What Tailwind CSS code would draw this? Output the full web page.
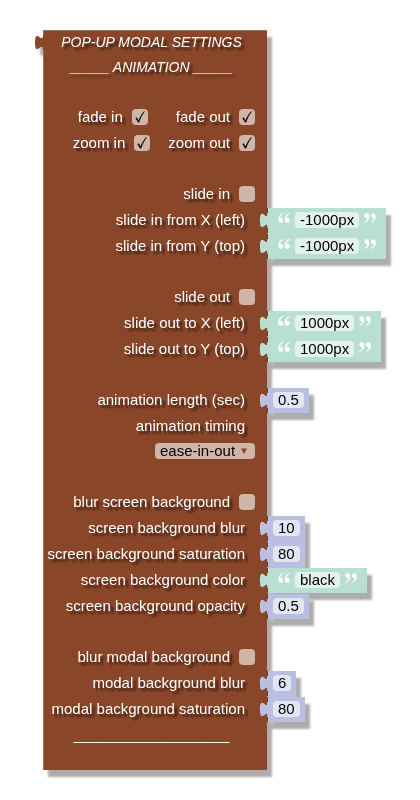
<!DOCTYPE html>
<html lang="en">
<head>
<meta charset="utf-8">
<meta name="viewport" content="width=device-width, initial-scale=1">
<title>Pop-up modal settings</title>
<script src="https://cdn.jsdelivr.net/npm/@tailwindcss/browser@4"></script>
</head>
<body class="bg-white font-['Liberation_Sans',Arial,sans-serif] text-[15px] leading-6 text-white">

<svg class="hidden" aria-hidden="true">
  <symbol id="tab" viewBox="0 0 9 25">
    <path d="M9 0V5H8c0 10-8-8-8 7.500s8-2.500 8 7.500H9z" fill="currentColor"/>
  </symbol>
  <symbol id="edge" viewBox="0 0 9 25">
    <path d="M7.500 0V5M7.500 20V25" stroke="#50443f" stroke-width="1"/>
    <path d="M8 5.500c0 10-7.500-8-7.500 7" fill="none" stroke="#fff" stroke-opacity=".3"/>
  </symbol>
  <symbol id="check" viewBox="0 0 16 16">
    <path d="M3.300 9.200 4.800 8.200 6.500 11.300C7.800 7.800 9.800 4.800 12 2.300L12.900 2.500C10.500 5.700 8.600 9.300 7.200 13.400H5.800C5.200 11.800 4.400 10.300 3.300 9.200z" fill="#111"/>
  </symbol>
  <symbol id="open" viewBox="0 0 12 10">
    <path id="q" d="M5.300.1C2.200.8.2 3.200.2 6.300.2 8.600 1.200 9.800 2.800 9.800 4.200 9.800 5.200 8.800 5.200 7.400 5.200 6 4.300 5.100 3 5.100 2.600 5.100 2.300 5.200 2.100 5.300 2.300 3.300 3.400 1.700 5.500.6z" fill="#fff"/>
    <use href="#q" x="6.500"/>
  </symbol>
</svg>

<main class="w-fit pt-[30px] pb-[30px] pl-[43px]">
  <form class="relative drop-shadow-[5px_7px_1px_rgba(0,0,0,0.32)]">
    <svg class="absolute top-0 -left-2 h-[25px] w-[9px] text-[#8a4629]" aria-hidden="true"><use href="#tab"/></svg>

    <header class="w-[224px] border-t border-l border-[#a5705a] bg-[#8a4629] pr-2 text-center text-sm leading-6 italic text-shadow-[3px_3px_2px_rgba(0,0,0,0.6)]">
      <h1 class="-mt-px h-[25px]">POP-UP MODAL SETTINGS</h1>
      <h2 class="h-[50px]">_____ ANIMATION _____</h2>
    </header>

    <div class="w-[224px] border-l border-[#a5705a] bg-[#8a4629] pr-3 pb-[25px] text-shadow-[3px_3px_2px_rgba(0,0,0,0.6)]">
      <div class="flex h-[26px] justify-end gap-7">
        <label class="flex h-6 items-center gap-[9px]">fade in
          <span class="relative size-4"><input type="checkbox" checked class="peer block size-4 appearance-none rounded-[4px] bg-white/60"><svg class="pointer-events-none absolute inset-0 hidden size-4 peer-checked:block" aria-hidden="true"><use href="#check"/></svg></span></label>
        <label class="flex h-6 items-center gap-[9px]">fade out
          <span class="relative size-4"><input type="checkbox" checked class="peer block size-4 appearance-none rounded-[4px] bg-white/60"><svg class="pointer-events-none absolute inset-0 hidden size-4 peer-checked:block" aria-hidden="true"><use href="#check"/></svg></span></label>
      </div>
      <div class="flex h-[26px] justify-end gap-[18px]">
        <label class="flex h-6 items-center gap-[9px]">zoom in
          <span class="relative size-4"><input type="checkbox" checked class="peer block size-4 appearance-none rounded-[4px] bg-white/60"><svg class="pointer-events-none absolute inset-0 hidden size-4 peer-checked:block" aria-hidden="true"><use href="#check"/></svg></span></label>
        <label class="flex h-6 items-center gap-[9px]">zoom out
          <span class="relative size-4"><input type="checkbox" checked class="peer block size-4 appearance-none rounded-[4px] bg-white/60"><svg class="pointer-events-none absolute inset-0 hidden size-4 peer-checked:block" aria-hidden="true"><use href="#check"/></svg></span></label>
      </div>
    </div>

    <div class="flex h-[26px] w-[224px] justify-end border-l border-[#a5705a] bg-[#8a4629] pr-3 text-shadow-[3px_3px_2px_rgba(0,0,0,0.6)]">
      <label class="flex h-6 items-center gap-[9px]">slide in <input type="checkbox" class="size-4 appearance-none rounded-[4px] bg-white/60"></label>
    </div>
    <div class="flex h-[26px]">
      <label for="inx" class="w-[224px] shrink-0 border-l border-[#a5705a] bg-[#8a4629] pr-[22px] text-right text-shadow-[3px_3px_2px_rgba(0,0,0,0.6)]">slide in from X (left)</label>
      <div class="relative ml-px flex h-[26px] items-start gap-[5px] bg-[#b9dfd2] pt-1 pr-[10px] pl-[10px]">
        <svg class="absolute top-0 -left-2 h-[25px] w-[9px] text-[#b9dfd2]" aria-hidden="true"><use href="#tab"/><use href="#edge"/></svg>
        <svg class="mt-px h-[10px] w-3" aria-hidden="true"><use href="#open"/></svg>
        <input id="inx" value="-1000px" class="field-sizing-content h-4 rounded-[4px] bg-white/60 px-[5px] leading-4 text-black">
        <svg class="mt-px h-[10px] w-3 rotate-180" aria-hidden="true"><use href="#open"/></svg>
      </div>
    </div>
    <div class="flex h-[26px]">
      <label for="iny" class="w-[224px] shrink-0 border-l border-[#a5705a] bg-[#8a4629] pr-[22px] text-right text-shadow-[3px_3px_2px_rgba(0,0,0,0.6)]">slide in from Y (top)</label>
      <div class="relative ml-px flex h-[25px] items-start gap-[5px] bg-[#b9dfd2] pt-1 pr-[10px] pl-[10px]">
        <svg class="absolute top-0 -left-2 h-[25px] w-[9px] text-[#b9dfd2]" aria-hidden="true"><use href="#tab"/><use href="#edge"/></svg>
        <svg class="mt-px h-[10px] w-3" aria-hidden="true"><use href="#open"/></svg>
        <input id="iny" value="-1000px" class="field-sizing-content h-4 rounded-[4px] bg-white/60 px-[5px] leading-4 text-black">
        <svg class="mt-px h-[10px] w-3 rotate-180" aria-hidden="true"><use href="#open"/></svg>
      </div>
    </div>

    <div class="flex h-[51px] w-[224px] justify-end border-l border-[#a5705a] bg-[#8a4629] pt-[25px] pr-3 text-shadow-[3px_3px_2px_rgba(0,0,0,0.6)]">
      <label class="flex h-6 items-center gap-[9px]">slide out <input type="checkbox" class="size-4 appearance-none rounded-[4px] bg-white/60"></label>
    </div>
    <div class="flex h-[26px]">
      <label for="outx" class="w-[224px] shrink-0 border-l border-[#a5705a] bg-[#8a4629] pr-[22px] text-right text-shadow-[3px_3px_2px_rgba(0,0,0,0.6)]">slide out to X (left)</label>
      <div class="relative ml-px flex h-[26px] items-start gap-[5px] bg-[#b9dfd2] pt-1 pr-[10px] pl-[10px]">
        <svg class="absolute top-0 -left-2 h-[25px] w-[9px] text-[#b9dfd2]" aria-hidden="true"><use href="#tab"/><use href="#edge"/></svg>
        <svg class="mt-px h-[10px] w-3" aria-hidden="true"><use href="#open"/></svg>
        <input id="outx" value="1000px" class="field-sizing-content h-4 rounded-[4px] bg-white/60 px-[5px] leading-4 text-black">
        <svg class="mt-px h-[10px] w-3 rotate-180" aria-hidden="true"><use href="#open"/></svg>
      </div>
    </div>
    <div class="flex h-[26px]">
      <label for="outy" class="w-[224px] shrink-0 border-l border-[#a5705a] bg-[#8a4629] pr-[22px] text-right text-shadow-[3px_3px_2px_rgba(0,0,0,0.6)]">slide out to Y (top)</label>
      <div class="relative ml-px flex h-[25px] items-start gap-[5px] bg-[#b9dfd2] pt-1 pr-[10px] pl-[10px]">
        <svg class="absolute top-0 -left-2 h-[25px] w-[9px] text-[#b9dfd2]" aria-hidden="true"><use href="#tab"/><use href="#edge"/></svg>
        <svg class="mt-px h-[10px] w-3" aria-hidden="true"><use href="#open"/></svg>
        <input id="outy" value="1000px" class="field-sizing-content h-4 rounded-[4px] bg-white/60 px-[5px] leading-4 text-black">
        <svg class="mt-px h-[10px] w-3 rotate-180" aria-hidden="true"><use href="#open"/></svg>
      </div>
    </div>

    <div class="h-[25px] w-[224px] border-l border-[#a5705a] bg-[#8a4629]"></div>
    <div class="flex h-[26px]">
      <label for="len" class="w-[224px] shrink-0 border-l border-[#a5705a] bg-[#8a4629] pr-[22px] text-right text-shadow-[3px_3px_2px_rgba(0,0,0,0.6)]">animation length (sec)</label>
      <div class="relative ml-px flex h-[25px] items-start bg-[#babfe1] pt-1 pr-[5px] pl-[5px]">
        <svg class="absolute top-0 -left-2 h-[25px] w-[9px] text-[#babfe1]" aria-hidden="true"><use href="#tab"/><use href="#edge"/></svg>
        <input id="len" value="0.5" class="field-sizing-content h-4 rounded-[4px] bg-white/60 px-[5px] leading-4 text-black">
      </div>
    </div>
    <div class="w-[224px] border-l border-[#a5705a] bg-[#8a4629] pb-[25px]">
      <label for="timing" class="block h-[25px] pr-[22px] text-right text-shadow-[3px_3px_2px_rgba(0,0,0,0.6)]">animation timing</label>
      <div class="flex h-[26px] justify-end pt-1 pr-3">
        <div class="relative h-4">
          <select id="timing" class="block h-4 w-[100px] appearance-none rounded-[4px] bg-white/60 pl-[5px] leading-4 text-black"><option>ease-in-out</option><option>linear</option><option>ease</option></select>
          <svg class="pointer-events-none absolute top-[5px] right-2 h-[6px] w-[6px]" viewBox="0 0 6 6" aria-hidden="true"><path d="M0 .5H6L3 6z" fill="#8a4629"/></svg>
        </div>
      </div>
    </div>

    <div class="flex h-[26px] w-[224px] justify-end border-l border-[#a5705a] bg-[#8a4629] pr-3 text-shadow-[3px_3px_2px_rgba(0,0,0,0.6)]">
      <label class="flex h-6 items-center gap-[9px]">blur screen background <input type="checkbox" class="size-4 appearance-none rounded-[4px] bg-white/60"></label>
    </div>
    <div class="flex h-[26px]">
      <label for="sblur" class="w-[224px] shrink-0 border-l border-[#a5705a] bg-[#8a4629] pr-[22px] text-right text-shadow-[3px_3px_2px_rgba(0,0,0,0.6)]">screen background blur</label>
      <div class="relative ml-px flex h-[26px] items-start bg-[#babfe1] pt-1 pr-[5px] pl-[5px]">
        <svg class="absolute top-0 -left-2 h-[25px] w-[9px] text-[#babfe1]" aria-hidden="true"><use href="#tab"/><use href="#edge"/></svg>
        <input id="sblur" value="10" class="field-sizing-content h-4 rounded-[4px] bg-white/60 px-[5px] leading-4 text-black">
      </div>
    </div>
    <div class="flex h-[26px]">
      <label for="ssat" class="w-[224px] shrink-0 border-l border-[#a5705a] bg-[#8a4629] pr-[22px] text-right text-shadow-[3px_3px_2px_rgba(0,0,0,0.6)]">screen background saturation</label>
      <div class="relative ml-px flex h-[26px] items-start bg-[#babfe1] pt-1 pr-[5px] pl-[5px]">
        <svg class="absolute top-0 -left-2 h-[25px] w-[9px] text-[#babfe1]" aria-hidden="true"><use href="#tab"/><use href="#edge"/></svg>
        <input id="ssat" value="80" class="field-sizing-content h-4 rounded-[4px] bg-white/60 px-[5px] leading-4 text-black">
      </div>
    </div>
    <div class="flex h-[26px]">
      <label for="scol" class="w-[224px] shrink-0 border-l border-[#a5705a] bg-[#8a4629] pr-[22px] text-right text-shadow-[3px_3px_2px_rgba(0,0,0,0.6)]">screen background color</label>
      <div class="relative ml-px flex h-[25px] items-start gap-[5px] bg-[#b9dfd2] pt-1 pr-[10px] pl-[10px]">
        <svg class="absolute top-0 -left-2 h-[25px] w-[9px] text-[#b9dfd2]" aria-hidden="true"><use href="#tab"/><use href="#edge"/></svg>
        <svg class="mt-px h-[10px] w-3" aria-hidden="true"><use href="#open"/></svg>
        <input id="scol" value="black" class="field-sizing-content h-4 rounded-[4px] bg-white/60 px-[5px] leading-4 text-black">
        <svg class="mt-px h-[10px] w-3 rotate-180" aria-hidden="true"><use href="#open"/></svg>
      </div>
    </div>
    <div class="flex h-[26px]">
      <label for="sop" class="w-[224px] shrink-0 border-l border-[#a5705a] bg-[#8a4629] pr-[22px] text-right text-shadow-[3px_3px_2px_rgba(0,0,0,0.6)]">screen background opacity</label>
      <div class="relative ml-px flex h-[25px] items-start bg-[#babfe1] pt-1 pr-[5px] pl-[5px]">
        <svg class="absolute top-0 -left-2 h-[25px] w-[9px] text-[#babfe1]" aria-hidden="true"><use href="#tab"/><use href="#edge"/></svg>
        <input id="sop" value="0.5" class="field-sizing-content h-4 rounded-[4px] bg-white/60 px-[5px] leading-4 text-black">
      </div>
    </div>

    <div class="flex h-[51px] w-[224px] justify-end border-l border-[#a5705a] bg-[#8a4629] pt-[25px] pr-3 text-shadow-[3px_3px_2px_rgba(0,0,0,0.6)]">
      <label class="flex h-6 items-center gap-[9px]">blur modal background <input type="checkbox" class="size-4 appearance-none rounded-[4px] bg-white/60"></label>
    </div>
    <div class="flex h-[26px]">
      <label for="mblur" class="w-[224px] shrink-0 border-l border-[#a5705a] bg-[#8a4629] pr-[22px] text-right text-shadow-[3px_3px_2px_rgba(0,0,0,0.6)]">modal background blur</label>
      <div class="relative ml-px flex h-[26px] items-start bg-[#babfe1] pt-1 pr-[5px] pl-[5px]">
        <svg class="absolute top-0 -left-2 h-[25px] w-[9px] text-[#babfe1]" aria-hidden="true"><use href="#tab"/><use href="#edge"/></svg>
        <input id="mblur" value="6" class="field-sizing-content h-4 rounded-[4px] bg-white/60 px-[5px] leading-4 text-black">
      </div>
    </div>
    <div class="flex h-[26px]">
      <label for="msat" class="w-[224px] shrink-0 border-l border-[#a5705a] bg-[#8a4629] pr-[22px] text-right text-shadow-[3px_3px_2px_rgba(0,0,0,0.6)]">modal background saturation</label>
      <div class="relative ml-px flex h-[25px] items-start bg-[#babfe1] pt-1 pr-[5px] pl-[5px]">
        <svg class="absolute top-0 -left-2 h-[25px] w-[9px] text-[#babfe1]" aria-hidden="true"><use href="#tab"/><use href="#edge"/></svg>
        <input id="msat" value="80" class="field-sizing-content h-4 rounded-[4px] bg-white/60 px-[5px] leading-4 text-black">
      </div>
    </div>

    <footer class="h-[47px] w-[224px] border-l border-[#a5705a] bg-[#8a4629] pr-2 text-center text-sm leading-6">____________________</footer>
  </form>
</main>
</body>
</html>
